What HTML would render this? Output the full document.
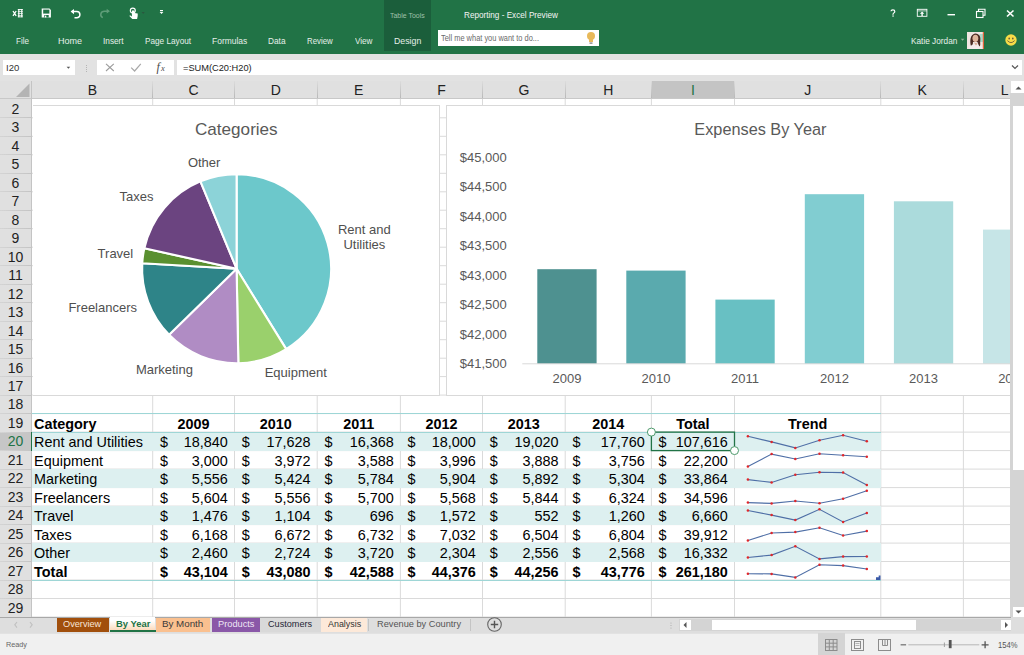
<!DOCTYPE html><html><head><meta charset="utf-8"><style>
*{margin:0;padding:0;box-sizing:border-box}
body{width:1024px;height:655px;overflow:hidden;position:relative;background:#fff;font-family:"Liberation Sans", sans-serif}
.a{position:absolute}
.t{position:absolute;white-space:nowrap;line-height:1}
</style></head><body>
<div class="a" style="left:0;top:0;width:1024px;height:54px;background:#217346"></div>
<div class="a" style="left:384px;top:0;width:47px;height:51px;background:#1b5e3b"></div>
<div class="t" style="left:390.17px;top:12.03px;font-size:7.5px;font-weight:normal;color:#9fc0aa;transform:scaleX(0.9270);transform-origin:0 0;">Table Tools</div>
<div class="t" style="left:464.42px;top:10.63px;font-size:9px;font-weight:normal;color:#f4f4f4;transform:scaleX(0.9071);transform-origin:0 0;">Reporting - Excel Preview</div>
<div class="t" style="left:16.26px;top:35.77px;font-size:9.5px;font-weight:normal;color:#e6efe9;transform:scaleX(0.8491);transform-origin:0 0;">File</div>
<div class="t" style="left:58.29px;top:35.77px;font-size:9.5px;font-weight:normal;color:#e6efe9;transform:scaleX(0.9485);transform-origin:0 0;">Home</div>
<div class="t" style="left:103.35px;top:35.77px;font-size:9.5px;font-weight:normal;color:#e6efe9;transform:scaleX(0.8696);transform-origin:0 0;">Insert</div>
<div class="t" style="left:145.25px;top:35.77px;font-size:9.5px;font-weight:normal;color:#e6efe9;transform:scaleX(0.8648);transform-origin:0 0;">Page Layout</div>
<div class="t" style="left:212.03px;top:35.77px;font-size:9.5px;font-weight:normal;color:#e6efe9;transform:scaleX(0.8909);transform-origin:0 0;">Formulas</div>
<div class="t" style="left:268.25px;top:35.77px;font-size:9.5px;font-weight:normal;color:#e6efe9;transform:scaleX(0.8718);transform-origin:0 0;">Data</div>
<div class="t" style="left:306.98px;top:35.77px;font-size:9.5px;font-weight:normal;color:#e6efe9;transform:scaleX(0.8262);transform-origin:0 0;">Review</div>
<div class="t" style="left:354.50px;top:35.77px;font-size:9.5px;font-weight:normal;color:#e6efe9;transform:scaleX(0.8537);transform-origin:0 0;">View</div>
<div class="t" style="left:393.61px;top:35.77px;font-size:9.5px;font-weight:normal;color:#e6efe9;transform:scaleX(0.9239);transform-origin:0 0;">Design</div>
<div class="a" style="left:438px;top:30px;width:161px;height:16px;background:#fff"></div>
<div class="t" style="left:440.79px;top:34.23px;font-size:9px;font-weight:normal;color:#6a6a6a;transform:scaleX(0.8264);transform-origin:0 0;">Tell me what you want to do...</div>
<svg class="a" style="left:585px;top:31px" width="12" height="14" viewBox="0 0 12 14"><circle cx="6" cy="5" r="4" fill="#e8b95a"/><rect x="4" y="8" width="4" height="3" fill="#e8b95a"/><rect x="4.5" y="11.5" width="3" height="1.2" fill="#777"/></svg>
<div class="t" style="left:911.35px;top:35.56px;font-size:9.5px;font-weight:normal;color:#e6efe9;transform:scaleX(0.8692);transform-origin:0 0;">Katie Jordan</div>
<svg class="a" style="left:960px;top:38px" width="6" height="4" viewBox="0 0 6 4"><path d="M0.8 0.8h3.6l-1.8 2z" fill="#8fb59b"/></svg>
<svg class="a" style="left:967px;top:31.6px" width="17.4" height="17.4" viewBox="0 0 17.4 17.4"><rect width="17.4" height="17.4" fill="#efe6e2"/><rect x="12.5" y="2" width="3.5" height="8" fill="#a8d8c8"/><rect x="15.8" y="0" width="1.6" height="17.4" fill="#e0643a"/><path d="M1.5 17.4 C2 13,4 12.5,8.5 12.5 C13 12.5,15 13,15.5 17.4z" fill="#f4ebeb"/><path d="M3.8 13.5 C2.8 9,3 2.5,8 1.4 C12.5 1.2,14 5,13.2 9 C13 11.5,13.8 13.5,12.5 14.5 C11 12,10.5 10,10.5 10 L6 10 C6 12,5.5 13.5,3.8 13.5z" fill="#4b2a22"/><ellipse cx="8.4" cy="6.3" rx="2.9" ry="3.6" fill="#dfb59c"/><path d="M7 10.5 l2 3 l1.5 -2z" fill="#d9a88e"/></svg>
<svg class="a" style="left:1004.5px;top:34.2px" width="12" height="12" viewBox="0 0 12 12"><circle cx="6" cy="6" r="5.7" fill="#f7dc48"/><ellipse cx="4.2" cy="4.4" rx="0.85" ry="1" fill="#6a603c"/><ellipse cx="7.8" cy="4.4" rx="0.85" ry="1" fill="#6a603c"/><path d="M2.4 6.6 Q6 10.6 9.6 6.6" stroke="#6a603c" stroke-width="0.9" fill="none"/></svg>
<svg class="a" style="left:0;top:0" width="180" height="28" viewBox="0 0 180 28"><path d="M13 11 l3.2 4.8 M16.2 11 l-3.2 4.8" stroke="#fff" stroke-width="1.3"/><g fill="#fff"><rect x="18.2" y="9" width="1.2" height="8.2"/><rect x="21.2" y="9" width="1.2" height="8.2"/><rect x="17.8" y="9" width="5" height="0.9"/><rect x="17.8" y="11.2" width="5" height="0.7"/><rect x="17.8" y="13.3" width="5" height="0.7"/><rect x="17.8" y="15.4" width="5" height="0.7"/><rect x="17.8" y="16.5" width="5" height="0.8"/></g><path d="M41.7 8.5h7.8l1.4 1.4v7.6h-9.2z" fill="#fff"/><rect x="43.2" y="9.6" width="6.2" height="4" fill="#217346"/><rect x="44.3" y="15" width="4.4" height="2.5" fill="#217346"/><rect x="45" y="15.6" width="1.3" height="1.9" fill="#fff"/><path d="M71.8 11.6 h5 a3.1 3.1 0 0 1 0 6.2 h-2.3" stroke="#fff" stroke-width="1.5" fill="none"/><path d="M70.6 11.6 l3.4 -2.7 v5.4z" fill="#fff"/><path d="M102.8 17.6 c-3.2 -1.6 -2.6 -6.4 1.8 -6.4 h3.6" stroke="#5f9d79" stroke-width="1.5" fill="none"/><path d="M109.9 11.2 l-3.2 -2.4 v4.8z" fill="#5f9d79"/><circle cx="132.8" cy="10.6" r="2.5" fill="none" stroke="#fff" stroke-width="1.1"/><path d="M131.9 10.6 v6 l-1.9 -1.3 l-0.6 0.8 l2.9 3 h4.8 l0.6 -3.2 v-2.4 l-3.2 -0.6 v-2.3z" fill="#fff"/><path d="M141.6 12.2 h3.2 l-1.6 1.6z" fill="#2d4f3c"/><rect x="160" y="10" width="3" height="1.2" fill="#fff"/><path d="M159.6 12 h3.8 l-1.9 2z" fill="#fff"/></svg>
<svg class="a" style="left:880px;top:0" width="144" height="26" viewBox="880 0 144 26"><path d="M891 11.3 c0.1 -1.9 3.8 -1.9 3.8 0.1 c0 1.4 -1.8 1.5 -1.8 2.9 v0.4" stroke="#fff" stroke-width="1.2" fill="none"/><rect x="892.4" y="15.4" width="1.3" height="1.3" fill="#fff"/><rect x="917.3" y="9.3" width="9.6" height="7" fill="none" stroke="#fff" stroke-width="0.9"/><path d="M917.3 10.9h9.6" stroke="#fff" stroke-width="0.7"/><path d="M922.1 11.6 l-2.2 2.2 h1.5 v2.2 h1.4 v-2.2 h1.5z" fill="#fff"/><rect x="947.5" y="14" width="7.5" height="1.4" fill="#fff"/><rect x="976.5" y="11.5" width="6.5" height="6" fill="none" stroke="#fff" stroke-width="1.1"/><path d="M978.5 11.5 v-2.2 h6.5 v6 h-2" fill="none" stroke="#fff" stroke-width="1.1"/><path d="M1007 10.5 l6.5 6 M1013.5 10.5 l-6.5 6" stroke="#fff" stroke-width="1.6"/></svg>
<div class="a" style="left:0;top:54px;width:1024px;height:26.5px;background:#e2e2e2"></div>
<div class="a" style="left:3px;top:60px;width:72px;height:15px;background:#fff"></div>
<div class="t" style="left:6px;top:63px;font-size:9.5px;color:#333">I20</div>
<svg class="a" style="left:66px;top:66px" width="5" height="4" viewBox="0 0 5 4"><path d="M0.6 0.8h3.6l-1.8 2z" fill="#555"/></svg>
<svg class="a" style="left:85px;top:64px" width="3" height="8" viewBox="0 0 3 8"><g fill="#aaa"><rect x="1" y="1" width="0.9" height="0.9"/><rect x="1" y="3" width="0.9" height="0.9"/><rect x="1" y="5" width="0.9" height="0.9"/><rect x="1" y="7" width="0.9" height="0.9"/></g></svg>
<div class="a" style="left:97px;top:60px;width:77px;height:15px;background:#fff"></div>
<svg class="a" style="left:97px;top:60px" width="77" height="15" viewBox="97 60 77 15"><path d="M106 63.8 l7.8 7.2 M113.8 63.8 l-7.8 7.2" stroke="#9c9c9c" stroke-width="1.1"/><path d="M131.2 67.6 l3.4 3.4 l6.2 -7.2" stroke="#a8a8a8" stroke-width="1.2" fill="none"/><text x="156.6" y="70.6" font-family="Liberation Serif" font-style="italic" font-size="12" fill="#4a4a4a">f</text><text x="161" y="71.4" font-family="Liberation Serif" font-style="italic" font-size="8.5" fill="#4a4a4a">x</text></svg>
<div class="a" style="left:177px;top:60px;width:845px;height:15px;background:#fff"></div>
<div class="t" style="left:182.80px;top:63.80px;font-size:9.2px;font-weight:normal;color:#222;transform:scaleX(1.0067);transform-origin:0 0;">=SUM(C20:H20)</div>
<svg class="a" style="left:1011px;top:64px" width="8" height="6" viewBox="0 0 8 6"><path d="M1 1.5 l3 3 l3 -3" stroke="#555" stroke-width="1.2" fill="none"/></svg>
<div class="a" style="left:0;top:80.5px;width:1010.5px;height:18.3px;background:#e0e0e0"></div>
<svg class="a" style="left:0;top:80px" width="32" height="19" viewBox="0 0 32 19"><path d="M29.5 3.5 v13.5 h-13.5z" fill="#b4b4b4"/></svg>
<div class="a" style="left:651.4px;top:80.8px;width:83.1px;height:18.3px;background:#c4c4c4;border-bottom:1.6px solid #217346"></div>
<div class="t" style="left:32.0px;top:83px;width:120.7px;text-align:center;font-size:14px;color:#222">B</div>
<div class="t" style="left:152.7px;top:83px;width:81.8px;text-align:center;font-size:14px;color:#222">C</div>
<div class="t" style="left:234.5px;top:83px;width:82.7px;text-align:center;font-size:14px;color:#222">D</div>
<div class="t" style="left:317.2px;top:83px;width:83.2px;text-align:center;font-size:14px;color:#222">E</div>
<div class="t" style="left:400.4px;top:83px;width:82.1px;text-align:center;font-size:14px;color:#222">F</div>
<div class="t" style="left:482.5px;top:83px;width:82.7px;text-align:center;font-size:14px;color:#222">G</div>
<div class="t" style="left:565.2px;top:83px;width:86.2px;text-align:center;font-size:14px;color:#222">H</div>
<div class="t" style="left:651.4px;top:83px;width:83.1px;text-align:center;font-size:14px;color:#217346">I</div>
<div class="t" style="left:734.5px;top:83px;width:146.3px;text-align:center;font-size:14px;color:#222">J</div>
<div class="t" style="left:880.8px;top:83px;width:82.6px;text-align:center;font-size:14px;color:#222">K</div>
<div class="t" style="left:963.4px;top:83px;width:82.6px;text-align:center;font-size:14px;color:#222">L</div>
<div class="a" style="left:152.2px;top:81px;width:1px;height:17.5px;background:linear-gradient(#dcdcdc,#b6b6b6)"></div>
<div class="a" style="left:234.0px;top:81px;width:1px;height:17.5px;background:linear-gradient(#dcdcdc,#b6b6b6)"></div>
<div class="a" style="left:316.7px;top:81px;width:1px;height:17.5px;background:linear-gradient(#dcdcdc,#b6b6b6)"></div>
<div class="a" style="left:399.9px;top:81px;width:1px;height:17.5px;background:linear-gradient(#dcdcdc,#b6b6b6)"></div>
<div class="a" style="left:482.0px;top:81px;width:1px;height:17.5px;background:linear-gradient(#dcdcdc,#b6b6b6)"></div>
<div class="a" style="left:564.7px;top:81px;width:1px;height:17.5px;background:linear-gradient(#dcdcdc,#b6b6b6)"></div>
<div class="a" style="left:650.9px;top:81px;width:1px;height:17.5px;background:linear-gradient(#dcdcdc,#b6b6b6)"></div>
<div class="a" style="left:734.0px;top:81px;width:1px;height:17.5px;background:linear-gradient(#dcdcdc,#b6b6b6)"></div>
<div class="a" style="left:880.3px;top:81px;width:1px;height:17.5px;background:linear-gradient(#dcdcdc,#b6b6b6)"></div>
<div class="a" style="left:962.9px;top:81px;width:1px;height:17.5px;background:linear-gradient(#dcdcdc,#b6b6b6)"></div>
<div class="a" style="left:0;top:98px;width:1010.5px;height:1px;background:#c8c8c8"></div>
<div class="a" style="left:0;top:98.8px;width:32px;height:518.2px;background:#e0e0e0"></div>
<div class="a" style="left:0;top:432.1px;width:32px;height:18.5px;background:#c6c6c6"></div>
<div class="t" style="left:0;top:101.6px;width:31px;text-align:center;font-size:14px;color:#222">2</div>
<div class="a" style="left:0;top:117.3px;width:31px;height:1px;background:linear-gradient(90deg,#d4d4d4,#c4c4c4)"></div>
<div class="t" style="left:0;top:120.1px;width:31px;text-align:center;font-size:14px;color:#222">3</div>
<div class="a" style="left:0;top:135.8px;width:31px;height:1px;background:linear-gradient(90deg,#d4d4d4,#c4c4c4)"></div>
<div class="t" style="left:0;top:138.6px;width:31px;text-align:center;font-size:14px;color:#222">4</div>
<div class="a" style="left:0;top:154.3px;width:31px;height:1px;background:linear-gradient(90deg,#d4d4d4,#c4c4c4)"></div>
<div class="t" style="left:0;top:157.1px;width:31px;text-align:center;font-size:14px;color:#222">5</div>
<div class="a" style="left:0;top:172.8px;width:31px;height:1px;background:linear-gradient(90deg,#d4d4d4,#c4c4c4)"></div>
<div class="t" style="left:0;top:175.6px;width:31px;text-align:center;font-size:14px;color:#222">6</div>
<div class="a" style="left:0;top:191.2px;width:31px;height:1px;background:linear-gradient(90deg,#d4d4d4,#c4c4c4)"></div>
<div class="t" style="left:0;top:194.1px;width:31px;text-align:center;font-size:14px;color:#222">7</div>
<div class="a" style="left:0;top:209.7px;width:31px;height:1px;background:linear-gradient(90deg,#d4d4d4,#c4c4c4)"></div>
<div class="t" style="left:0;top:212.5px;width:31px;text-align:center;font-size:14px;color:#222">8</div>
<div class="a" style="left:0;top:228.2px;width:31px;height:1px;background:linear-gradient(90deg,#d4d4d4,#c4c4c4)"></div>
<div class="t" style="left:0;top:231.0px;width:31px;text-align:center;font-size:14px;color:#222">9</div>
<div class="a" style="left:0;top:246.7px;width:31px;height:1px;background:linear-gradient(90deg,#d4d4d4,#c4c4c4)"></div>
<div class="t" style="left:0;top:249.5px;width:31px;text-align:center;font-size:14px;color:#222">10</div>
<div class="a" style="left:0;top:265.2px;width:31px;height:1px;background:linear-gradient(90deg,#d4d4d4,#c4c4c4)"></div>
<div class="t" style="left:0;top:268.0px;width:31px;text-align:center;font-size:14px;color:#222">11</div>
<div class="a" style="left:0;top:283.7px;width:31px;height:1px;background:linear-gradient(90deg,#d4d4d4,#c4c4c4)"></div>
<div class="t" style="left:0;top:286.5px;width:31px;text-align:center;font-size:14px;color:#222">12</div>
<div class="a" style="left:0;top:302.2px;width:31px;height:1px;background:linear-gradient(90deg,#d4d4d4,#c4c4c4)"></div>
<div class="t" style="left:0;top:305.0px;width:31px;text-align:center;font-size:14px;color:#222">13</div>
<div class="a" style="left:0;top:320.7px;width:31px;height:1px;background:linear-gradient(90deg,#d4d4d4,#c4c4c4)"></div>
<div class="t" style="left:0;top:323.5px;width:31px;text-align:center;font-size:14px;color:#222">14</div>
<div class="a" style="left:0;top:339.2px;width:31px;height:1px;background:linear-gradient(90deg,#d4d4d4,#c4c4c4)"></div>
<div class="t" style="left:0;top:342.0px;width:31px;text-align:center;font-size:14px;color:#222">15</div>
<div class="a" style="left:0;top:357.7px;width:31px;height:1px;background:linear-gradient(90deg,#d4d4d4,#c4c4c4)"></div>
<div class="t" style="left:0;top:360.5px;width:31px;text-align:center;font-size:14px;color:#222">16</div>
<div class="a" style="left:0;top:376.1px;width:31px;height:1px;background:linear-gradient(90deg,#d4d4d4,#c4c4c4)"></div>
<div class="t" style="left:0;top:378.9px;width:31px;text-align:center;font-size:14px;color:#222">17</div>
<div class="a" style="left:0;top:394.6px;width:31px;height:1px;background:linear-gradient(90deg,#d4d4d4,#c4c4c4)"></div>
<div class="t" style="left:0;top:397.4px;width:31px;text-align:center;font-size:14px;color:#222">18</div>
<div class="a" style="left:0;top:413.1px;width:31px;height:1px;background:linear-gradient(90deg,#d4d4d4,#c4c4c4)"></div>
<div class="t" style="left:0;top:415.9px;width:31px;text-align:center;font-size:14px;color:#222">19</div>
<div class="a" style="left:0;top:431.6px;width:31px;height:1px;background:linear-gradient(90deg,#d4d4d4,#c4c4c4)"></div>
<div class="t" style="left:0;top:434.4px;width:31px;text-align:center;font-size:14px;color:#217346">20</div>
<div class="a" style="left:0;top:450.1px;width:31px;height:1px;background:linear-gradient(90deg,#d4d4d4,#c4c4c4)"></div>
<div class="t" style="left:0;top:452.9px;width:31px;text-align:center;font-size:14px;color:#222">21</div>
<div class="a" style="left:0;top:468.6px;width:31px;height:1px;background:linear-gradient(90deg,#d4d4d4,#c4c4c4)"></div>
<div class="t" style="left:0;top:471.4px;width:31px;text-align:center;font-size:14px;color:#222">22</div>
<div class="a" style="left:0;top:487.1px;width:31px;height:1px;background:linear-gradient(90deg,#d4d4d4,#c4c4c4)"></div>
<div class="t" style="left:0;top:489.9px;width:31px;text-align:center;font-size:14px;color:#222">23</div>
<div class="a" style="left:0;top:505.6px;width:31px;height:1px;background:linear-gradient(90deg,#d4d4d4,#c4c4c4)"></div>
<div class="t" style="left:0;top:508.4px;width:31px;text-align:center;font-size:14px;color:#222">24</div>
<div class="a" style="left:0;top:524.1px;width:31px;height:1px;background:linear-gradient(90deg,#d4d4d4,#c4c4c4)"></div>
<div class="t" style="left:0;top:526.9px;width:31px;text-align:center;font-size:14px;color:#222">25</div>
<div class="a" style="left:0;top:542.6px;width:31px;height:1px;background:linear-gradient(90deg,#d4d4d4,#c4c4c4)"></div>
<div class="t" style="left:0;top:545.4px;width:31px;text-align:center;font-size:14px;color:#222">26</div>
<div class="a" style="left:0;top:561.0px;width:31px;height:1px;background:linear-gradient(90deg,#d4d4d4,#c4c4c4)"></div>
<div class="t" style="left:0;top:563.8px;width:31px;text-align:center;font-size:14px;color:#222">27</div>
<div class="a" style="left:0;top:579.5px;width:31px;height:1px;background:linear-gradient(90deg,#d4d4d4,#c4c4c4)"></div>
<div class="t" style="left:0;top:582.3px;width:31px;text-align:center;font-size:14px;color:#222">28</div>
<div class="a" style="left:0;top:598.0px;width:31px;height:1px;background:linear-gradient(90deg,#d4d4d4,#c4c4c4)"></div>
<div class="t" style="left:0;top:600.8px;width:31px;text-align:center;font-size:14px;color:#222">29</div>
<div class="a" style="left:0;top:616.5px;width:31px;height:1px;background:linear-gradient(90deg,#d4d4d4,#c4c4c4)"></div>
<div class="a" style="left:31px;top:81px;width:1px;height:536px;background:#c4c4c4"></div>
<div class="a" style="left:31px;top:432.1px;width:1.5px;height:18.5px;background:#217346"></div>
<svg class="a" style="left:0;top:0" width="1024" height="655" viewBox="0 0 1024 655"><line x1="152.7" y1="99" x2="152.7" y2="617" stroke="#dadada" stroke-width="1"/><line x1="234.5" y1="99" x2="234.5" y2="617" stroke="#dadada" stroke-width="1"/><line x1="317.2" y1="99" x2="317.2" y2="617" stroke="#dadada" stroke-width="1"/><line x1="400.4" y1="99" x2="400.4" y2="617" stroke="#dadada" stroke-width="1"/><line x1="482.5" y1="99" x2="482.5" y2="617" stroke="#dadada" stroke-width="1"/><line x1="565.2" y1="99" x2="565.2" y2="617" stroke="#dadada" stroke-width="1"/><line x1="651.4" y1="99" x2="651.4" y2="617" stroke="#dadada" stroke-width="1"/><line x1="734.5" y1="99" x2="734.5" y2="617" stroke="#dadada" stroke-width="1"/><line x1="880.8" y1="99" x2="880.8" y2="617" stroke="#dadada" stroke-width="1"/><line x1="963.4" y1="99" x2="963.4" y2="617" stroke="#dadada" stroke-width="1"/><line x1="32" y1="117.8" x2="1010.5" y2="117.8" stroke="#dadada" stroke-width="1"/><line x1="32" y1="136.3" x2="1010.5" y2="136.3" stroke="#dadada" stroke-width="1"/><line x1="32" y1="154.8" x2="1010.5" y2="154.8" stroke="#dadada" stroke-width="1"/><line x1="32" y1="173.3" x2="1010.5" y2="173.3" stroke="#dadada" stroke-width="1"/><line x1="32" y1="191.8" x2="1010.5" y2="191.8" stroke="#dadada" stroke-width="1"/><line x1="32" y1="210.2" x2="1010.5" y2="210.2" stroke="#dadada" stroke-width="1"/><line x1="32" y1="228.7" x2="1010.5" y2="228.7" stroke="#dadada" stroke-width="1"/><line x1="32" y1="247.2" x2="1010.5" y2="247.2" stroke="#dadada" stroke-width="1"/><line x1="32" y1="265.7" x2="1010.5" y2="265.7" stroke="#dadada" stroke-width="1"/><line x1="32" y1="284.2" x2="1010.5" y2="284.2" stroke="#dadada" stroke-width="1"/><line x1="32" y1="302.7" x2="1010.5" y2="302.7" stroke="#dadada" stroke-width="1"/><line x1="32" y1="321.2" x2="1010.5" y2="321.2" stroke="#dadada" stroke-width="1"/><line x1="32" y1="339.7" x2="1010.5" y2="339.7" stroke="#dadada" stroke-width="1"/><line x1="32" y1="358.2" x2="1010.5" y2="358.2" stroke="#dadada" stroke-width="1"/><line x1="32" y1="376.6" x2="1010.5" y2="376.6" stroke="#dadada" stroke-width="1"/><line x1="32" y1="395.1" x2="1010.5" y2="395.1" stroke="#dadada" stroke-width="1"/><line x1="32" y1="413.6" x2="1010.5" y2="413.6" stroke="#dadada" stroke-width="1"/><line x1="32" y1="432.1" x2="1010.5" y2="432.1" stroke="#dadada" stroke-width="1"/><line x1="32" y1="450.6" x2="1010.5" y2="450.6" stroke="#dadada" stroke-width="1"/><line x1="32" y1="469.1" x2="1010.5" y2="469.1" stroke="#dadada" stroke-width="1"/><line x1="32" y1="487.6" x2="1010.5" y2="487.6" stroke="#dadada" stroke-width="1"/><line x1="32" y1="506.1" x2="1010.5" y2="506.1" stroke="#dadada" stroke-width="1"/><line x1="32" y1="524.6" x2="1010.5" y2="524.6" stroke="#dadada" stroke-width="1"/><line x1="32" y1="543.1" x2="1010.5" y2="543.1" stroke="#dadada" stroke-width="1"/><line x1="32" y1="561.5" x2="1010.5" y2="561.5" stroke="#dadada" stroke-width="1"/><line x1="32" y1="580.0" x2="1010.5" y2="580.0" stroke="#dadada" stroke-width="1"/><line x1="32" y1="598.5" x2="1010.5" y2="598.5" stroke="#dadada" stroke-width="1"/><line x1="32" y1="617.0" x2="1010.5" y2="617.0" stroke="#dadada" stroke-width="1"/></svg>
<div class="a" style="left:32px;top:432.1px;width:848.8px;height:18.49px;background:#ddf0f0"></div>
<div class="a" style="left:32px;top:469.1px;width:848.8px;height:18.49px;background:#ddf0f0"></div>
<div class="a" style="left:32px;top:506.1px;width:848.8px;height:18.49px;background:#ddf0f0"></div>
<div class="a" style="left:32px;top:543.1px;width:848.8px;height:18.49px;background:#ddf0f0"></div>
<div class="a" style="left:32px;top:413.1px;width:848.8px;height:1px;background:#9ed6d6"></div>
<div class="a" style="left:32px;top:431.6px;width:848.8px;height:1px;background:#9ed6d6"></div>
<div class="a" style="left:32px;top:579.5px;width:848.8px;height:1px;background:#9ed6d6"></div>
<div class="t" style="left:34.1px;top:416.6px;font-size:14.4px;font-weight:bold;color:#000">Category</div>
<div class="t" style="left:152.7px;top:416.6px;width:81.8px;text-align:center;font-size:14.4px;font-weight:bold;color:#000">2009</div>
<div class="t" style="left:234.5px;top:416.6px;width:82.7px;text-align:center;font-size:14.4px;font-weight:bold;color:#000">2010</div>
<div class="t" style="left:317.2px;top:416.6px;width:83.2px;text-align:center;font-size:14.4px;font-weight:bold;color:#000">2011</div>
<div class="t" style="left:400.4px;top:416.6px;width:82.1px;text-align:center;font-size:14.4px;font-weight:bold;color:#000">2012</div>
<div class="t" style="left:482.5px;top:416.6px;width:82.7px;text-align:center;font-size:14.4px;font-weight:bold;color:#000">2013</div>
<div class="t" style="left:565.2px;top:416.6px;width:86.2px;text-align:center;font-size:14.4px;font-weight:bold;color:#000">2014</div>
<div class="t" style="left:651.4px;top:416.6px;width:83.1px;text-align:center;font-size:14.4px;font-weight:bold;color:#000">Total</div>
<div class="t" style="left:734.5px;top:416.6px;width:146.3px;text-align:center;font-size:14.4px;font-weight:bold;color:#000">Trend</div>
<div class="t" style="left:34.1px;top:435.1px;font-size:14.4px;font-weight:normal;color:#000">Rent and Utilities</div>
<div class="t" style="left:159.9px;top:435.1px;font-size:14.4px;font-weight:normal;color:#000">$</div>
<div class="t" style="left:127.8px;top:435.1px;width:100px;text-align:right;font-size:14.4px;font-weight:normal;color:#000">18,840</div>
<div class="t" style="left:241.7px;top:435.1px;font-size:14.4px;font-weight:normal;color:#000">$</div>
<div class="t" style="left:210.5px;top:435.1px;width:100px;text-align:right;font-size:14.4px;font-weight:normal;color:#000">17,628</div>
<div class="t" style="left:324.4px;top:435.1px;font-size:14.4px;font-weight:normal;color:#000">$</div>
<div class="t" style="left:293.7px;top:435.1px;width:100px;text-align:right;font-size:14.4px;font-weight:normal;color:#000">16,368</div>
<div class="t" style="left:407.6px;top:435.1px;font-size:14.4px;font-weight:normal;color:#000">$</div>
<div class="t" style="left:375.8px;top:435.1px;width:100px;text-align:right;font-size:14.4px;font-weight:normal;color:#000">18,000</div>
<div class="t" style="left:489.7px;top:435.1px;font-size:14.4px;font-weight:normal;color:#000">$</div>
<div class="t" style="left:458.5px;top:435.1px;width:100px;text-align:right;font-size:14.4px;font-weight:normal;color:#000">19,020</div>
<div class="t" style="left:572.4px;top:435.1px;font-size:14.4px;font-weight:normal;color:#000">$</div>
<div class="t" style="left:544.7px;top:435.1px;width:100px;text-align:right;font-size:14.4px;font-weight:normal;color:#000">17,760</div>
<div class="t" style="left:658.6px;top:435.1px;font-size:14.4px;font-weight:normal;color:#000">$</div>
<div class="t" style="left:627.8px;top:435.1px;width:100px;text-align:right;font-size:14.4px;font-weight:normal;color:#000">107,616</div>
<div class="t" style="left:34.1px;top:453.6px;font-size:14.4px;font-weight:normal;color:#000">Equipment</div>
<div class="t" style="left:159.9px;top:453.6px;font-size:14.4px;font-weight:normal;color:#000">$</div>
<div class="t" style="left:127.8px;top:453.6px;width:100px;text-align:right;font-size:14.4px;font-weight:normal;color:#000">3,000</div>
<div class="t" style="left:241.7px;top:453.6px;font-size:14.4px;font-weight:normal;color:#000">$</div>
<div class="t" style="left:210.5px;top:453.6px;width:100px;text-align:right;font-size:14.4px;font-weight:normal;color:#000">3,972</div>
<div class="t" style="left:324.4px;top:453.6px;font-size:14.4px;font-weight:normal;color:#000">$</div>
<div class="t" style="left:293.7px;top:453.6px;width:100px;text-align:right;font-size:14.4px;font-weight:normal;color:#000">3,588</div>
<div class="t" style="left:407.6px;top:453.6px;font-size:14.4px;font-weight:normal;color:#000">$</div>
<div class="t" style="left:375.8px;top:453.6px;width:100px;text-align:right;font-size:14.4px;font-weight:normal;color:#000">3,996</div>
<div class="t" style="left:489.7px;top:453.6px;font-size:14.4px;font-weight:normal;color:#000">$</div>
<div class="t" style="left:458.5px;top:453.6px;width:100px;text-align:right;font-size:14.4px;font-weight:normal;color:#000">3,888</div>
<div class="t" style="left:572.4px;top:453.6px;font-size:14.4px;font-weight:normal;color:#000">$</div>
<div class="t" style="left:544.7px;top:453.6px;width:100px;text-align:right;font-size:14.4px;font-weight:normal;color:#000">3,756</div>
<div class="t" style="left:658.6px;top:453.6px;font-size:14.4px;font-weight:normal;color:#000">$</div>
<div class="t" style="left:627.8px;top:453.6px;width:100px;text-align:right;font-size:14.4px;font-weight:normal;color:#000">22,200</div>
<div class="t" style="left:34.1px;top:472.1px;font-size:14.4px;font-weight:normal;color:#000">Marketing</div>
<div class="t" style="left:159.9px;top:472.1px;font-size:14.4px;font-weight:normal;color:#000">$</div>
<div class="t" style="left:127.8px;top:472.1px;width:100px;text-align:right;font-size:14.4px;font-weight:normal;color:#000">5,556</div>
<div class="t" style="left:241.7px;top:472.1px;font-size:14.4px;font-weight:normal;color:#000">$</div>
<div class="t" style="left:210.5px;top:472.1px;width:100px;text-align:right;font-size:14.4px;font-weight:normal;color:#000">5,424</div>
<div class="t" style="left:324.4px;top:472.1px;font-size:14.4px;font-weight:normal;color:#000">$</div>
<div class="t" style="left:293.7px;top:472.1px;width:100px;text-align:right;font-size:14.4px;font-weight:normal;color:#000">5,784</div>
<div class="t" style="left:407.6px;top:472.1px;font-size:14.4px;font-weight:normal;color:#000">$</div>
<div class="t" style="left:375.8px;top:472.1px;width:100px;text-align:right;font-size:14.4px;font-weight:normal;color:#000">5,904</div>
<div class="t" style="left:489.7px;top:472.1px;font-size:14.4px;font-weight:normal;color:#000">$</div>
<div class="t" style="left:458.5px;top:472.1px;width:100px;text-align:right;font-size:14.4px;font-weight:normal;color:#000">5,892</div>
<div class="t" style="left:572.4px;top:472.1px;font-size:14.4px;font-weight:normal;color:#000">$</div>
<div class="t" style="left:544.7px;top:472.1px;width:100px;text-align:right;font-size:14.4px;font-weight:normal;color:#000">5,304</div>
<div class="t" style="left:658.6px;top:472.1px;font-size:14.4px;font-weight:normal;color:#000">$</div>
<div class="t" style="left:627.8px;top:472.1px;width:100px;text-align:right;font-size:14.4px;font-weight:normal;color:#000">33,864</div>
<div class="t" style="left:34.1px;top:490.6px;font-size:14.4px;font-weight:normal;color:#000">Freelancers</div>
<div class="t" style="left:159.9px;top:490.6px;font-size:14.4px;font-weight:normal;color:#000">$</div>
<div class="t" style="left:127.8px;top:490.6px;width:100px;text-align:right;font-size:14.4px;font-weight:normal;color:#000">5,604</div>
<div class="t" style="left:241.7px;top:490.6px;font-size:14.4px;font-weight:normal;color:#000">$</div>
<div class="t" style="left:210.5px;top:490.6px;width:100px;text-align:right;font-size:14.4px;font-weight:normal;color:#000">5,556</div>
<div class="t" style="left:324.4px;top:490.6px;font-size:14.4px;font-weight:normal;color:#000">$</div>
<div class="t" style="left:293.7px;top:490.6px;width:100px;text-align:right;font-size:14.4px;font-weight:normal;color:#000">5,700</div>
<div class="t" style="left:407.6px;top:490.6px;font-size:14.4px;font-weight:normal;color:#000">$</div>
<div class="t" style="left:375.8px;top:490.6px;width:100px;text-align:right;font-size:14.4px;font-weight:normal;color:#000">5,568</div>
<div class="t" style="left:489.7px;top:490.6px;font-size:14.4px;font-weight:normal;color:#000">$</div>
<div class="t" style="left:458.5px;top:490.6px;width:100px;text-align:right;font-size:14.4px;font-weight:normal;color:#000">5,844</div>
<div class="t" style="left:572.4px;top:490.6px;font-size:14.4px;font-weight:normal;color:#000">$</div>
<div class="t" style="left:544.7px;top:490.6px;width:100px;text-align:right;font-size:14.4px;font-weight:normal;color:#000">6,324</div>
<div class="t" style="left:658.6px;top:490.6px;font-size:14.4px;font-weight:normal;color:#000">$</div>
<div class="t" style="left:627.8px;top:490.6px;width:100px;text-align:right;font-size:14.4px;font-weight:normal;color:#000">34,596</div>
<div class="t" style="left:34.1px;top:509.1px;font-size:14.4px;font-weight:normal;color:#000">Travel</div>
<div class="t" style="left:159.9px;top:509.1px;font-size:14.4px;font-weight:normal;color:#000">$</div>
<div class="t" style="left:127.8px;top:509.1px;width:100px;text-align:right;font-size:14.4px;font-weight:normal;color:#000">1,476</div>
<div class="t" style="left:241.7px;top:509.1px;font-size:14.4px;font-weight:normal;color:#000">$</div>
<div class="t" style="left:210.5px;top:509.1px;width:100px;text-align:right;font-size:14.4px;font-weight:normal;color:#000">1,104</div>
<div class="t" style="left:324.4px;top:509.1px;font-size:14.4px;font-weight:normal;color:#000">$</div>
<div class="t" style="left:293.7px;top:509.1px;width:100px;text-align:right;font-size:14.4px;font-weight:normal;color:#000">696</div>
<div class="t" style="left:407.6px;top:509.1px;font-size:14.4px;font-weight:normal;color:#000">$</div>
<div class="t" style="left:375.8px;top:509.1px;width:100px;text-align:right;font-size:14.4px;font-weight:normal;color:#000">1,572</div>
<div class="t" style="left:489.7px;top:509.1px;font-size:14.4px;font-weight:normal;color:#000">$</div>
<div class="t" style="left:458.5px;top:509.1px;width:100px;text-align:right;font-size:14.4px;font-weight:normal;color:#000">552</div>
<div class="t" style="left:572.4px;top:509.1px;font-size:14.4px;font-weight:normal;color:#000">$</div>
<div class="t" style="left:544.7px;top:509.1px;width:100px;text-align:right;font-size:14.4px;font-weight:normal;color:#000">1,260</div>
<div class="t" style="left:658.6px;top:509.1px;font-size:14.4px;font-weight:normal;color:#000">$</div>
<div class="t" style="left:627.8px;top:509.1px;width:100px;text-align:right;font-size:14.4px;font-weight:normal;color:#000">6,660</div>
<div class="t" style="left:34.1px;top:527.6px;font-size:14.4px;font-weight:normal;color:#000">Taxes</div>
<div class="t" style="left:159.9px;top:527.6px;font-size:14.4px;font-weight:normal;color:#000">$</div>
<div class="t" style="left:127.8px;top:527.6px;width:100px;text-align:right;font-size:14.4px;font-weight:normal;color:#000">6,168</div>
<div class="t" style="left:241.7px;top:527.6px;font-size:14.4px;font-weight:normal;color:#000">$</div>
<div class="t" style="left:210.5px;top:527.6px;width:100px;text-align:right;font-size:14.4px;font-weight:normal;color:#000">6,672</div>
<div class="t" style="left:324.4px;top:527.6px;font-size:14.4px;font-weight:normal;color:#000">$</div>
<div class="t" style="left:293.7px;top:527.6px;width:100px;text-align:right;font-size:14.4px;font-weight:normal;color:#000">6,732</div>
<div class="t" style="left:407.6px;top:527.6px;font-size:14.4px;font-weight:normal;color:#000">$</div>
<div class="t" style="left:375.8px;top:527.6px;width:100px;text-align:right;font-size:14.4px;font-weight:normal;color:#000">7,032</div>
<div class="t" style="left:489.7px;top:527.6px;font-size:14.4px;font-weight:normal;color:#000">$</div>
<div class="t" style="left:458.5px;top:527.6px;width:100px;text-align:right;font-size:14.4px;font-weight:normal;color:#000">6,504</div>
<div class="t" style="left:572.4px;top:527.6px;font-size:14.4px;font-weight:normal;color:#000">$</div>
<div class="t" style="left:544.7px;top:527.6px;width:100px;text-align:right;font-size:14.4px;font-weight:normal;color:#000">6,804</div>
<div class="t" style="left:658.6px;top:527.6px;font-size:14.4px;font-weight:normal;color:#000">$</div>
<div class="t" style="left:627.8px;top:527.6px;width:100px;text-align:right;font-size:14.4px;font-weight:normal;color:#000">39,912</div>
<div class="t" style="left:34.1px;top:546.1px;font-size:14.4px;font-weight:normal;color:#000">Other</div>
<div class="t" style="left:159.9px;top:546.1px;font-size:14.4px;font-weight:normal;color:#000">$</div>
<div class="t" style="left:127.8px;top:546.1px;width:100px;text-align:right;font-size:14.4px;font-weight:normal;color:#000">2,460</div>
<div class="t" style="left:241.7px;top:546.1px;font-size:14.4px;font-weight:normal;color:#000">$</div>
<div class="t" style="left:210.5px;top:546.1px;width:100px;text-align:right;font-size:14.4px;font-weight:normal;color:#000">2,724</div>
<div class="t" style="left:324.4px;top:546.1px;font-size:14.4px;font-weight:normal;color:#000">$</div>
<div class="t" style="left:293.7px;top:546.1px;width:100px;text-align:right;font-size:14.4px;font-weight:normal;color:#000">3,720</div>
<div class="t" style="left:407.6px;top:546.1px;font-size:14.4px;font-weight:normal;color:#000">$</div>
<div class="t" style="left:375.8px;top:546.1px;width:100px;text-align:right;font-size:14.4px;font-weight:normal;color:#000">2,304</div>
<div class="t" style="left:489.7px;top:546.1px;font-size:14.4px;font-weight:normal;color:#000">$</div>
<div class="t" style="left:458.5px;top:546.1px;width:100px;text-align:right;font-size:14.4px;font-weight:normal;color:#000">2,556</div>
<div class="t" style="left:572.4px;top:546.1px;font-size:14.4px;font-weight:normal;color:#000">$</div>
<div class="t" style="left:544.7px;top:546.1px;width:100px;text-align:right;font-size:14.4px;font-weight:normal;color:#000">2,568</div>
<div class="t" style="left:658.6px;top:546.1px;font-size:14.4px;font-weight:normal;color:#000">$</div>
<div class="t" style="left:627.8px;top:546.1px;width:100px;text-align:right;font-size:14.4px;font-weight:normal;color:#000">16,332</div>
<div class="t" style="left:34.1px;top:564.5px;font-size:14.4px;font-weight:bold;color:#000">Total</div>
<div class="t" style="left:159.9px;top:564.5px;font-size:14.4px;font-weight:bold;color:#000">$</div>
<div class="t" style="left:127.8px;top:564.5px;width:100px;text-align:right;font-size:14.4px;font-weight:bold;color:#000">43,104</div>
<div class="t" style="left:241.7px;top:564.5px;font-size:14.4px;font-weight:bold;color:#000">$</div>
<div class="t" style="left:210.5px;top:564.5px;width:100px;text-align:right;font-size:14.4px;font-weight:bold;color:#000">43,080</div>
<div class="t" style="left:324.4px;top:564.5px;font-size:14.4px;font-weight:bold;color:#000">$</div>
<div class="t" style="left:293.7px;top:564.5px;width:100px;text-align:right;font-size:14.4px;font-weight:bold;color:#000">42,588</div>
<div class="t" style="left:407.6px;top:564.5px;font-size:14.4px;font-weight:bold;color:#000">$</div>
<div class="t" style="left:375.8px;top:564.5px;width:100px;text-align:right;font-size:14.4px;font-weight:bold;color:#000">44,376</div>
<div class="t" style="left:489.7px;top:564.5px;font-size:14.4px;font-weight:bold;color:#000">$</div>
<div class="t" style="left:458.5px;top:564.5px;width:100px;text-align:right;font-size:14.4px;font-weight:bold;color:#000">44,256</div>
<div class="t" style="left:572.4px;top:564.5px;font-size:14.4px;font-weight:bold;color:#000">$</div>
<div class="t" style="left:544.7px;top:564.5px;width:100px;text-align:right;font-size:14.4px;font-weight:bold;color:#000">43,776</div>
<div class="t" style="left:658.6px;top:564.5px;font-size:14.4px;font-weight:bold;color:#000">$</div>
<div class="t" style="left:627.8px;top:564.5px;width:100px;text-align:right;font-size:14.4px;font-weight:bold;color:#000">261,180</div>
<svg class="a" style="left:0;top:0" width="1024" height="655" viewBox="0 0 1024 655"><polyline points="747.9,436.2 771.6,441.9 795.3,447.9 819.5,440.2 843.1,435.3 866.8,441.3" fill="none" stroke="#4f6fa6" stroke-width="1.1"/><circle cx="747.9" cy="436.2" r="1.25" fill="#e0262a"/><circle cx="771.6" cy="441.9" r="1.25" fill="#e0262a"/><circle cx="795.3" cy="447.9" r="1.25" fill="#e0262a"/><circle cx="819.5" cy="440.2" r="1.25" fill="#e0262a"/><circle cx="843.1" cy="435.3" r="1.25" fill="#e0262a"/><circle cx="866.8" cy="441.3" r="1.25" fill="#e0262a"/><polyline points="747.9,466.4 771.6,454.1 795.3,459.0 819.5,453.8 843.1,455.2 866.8,456.8" fill="none" stroke="#4f6fa6" stroke-width="1.1"/><circle cx="747.9" cy="466.4" r="1.25" fill="#e0262a"/><circle cx="771.6" cy="454.1" r="1.25" fill="#e0262a"/><circle cx="795.3" cy="459.0" r="1.25" fill="#e0262a"/><circle cx="819.5" cy="453.8" r="1.25" fill="#e0262a"/><circle cx="843.1" cy="455.2" r="1.25" fill="#e0262a"/><circle cx="866.8" cy="456.8" r="1.25" fill="#e0262a"/><polyline points="747.9,479.6 771.6,482.4 795.3,474.8 819.5,472.3 843.1,472.6 866.8,484.9" fill="none" stroke="#4f6fa6" stroke-width="1.1"/><circle cx="747.9" cy="479.6" r="1.25" fill="#e0262a"/><circle cx="771.6" cy="482.4" r="1.25" fill="#e0262a"/><circle cx="795.3" cy="474.8" r="1.25" fill="#e0262a"/><circle cx="819.5" cy="472.3" r="1.25" fill="#e0262a"/><circle cx="843.1" cy="472.6" r="1.25" fill="#e0262a"/><circle cx="866.8" cy="484.9" r="1.25" fill="#e0262a"/><polyline points="747.9,502.6 771.6,503.4 795.3,501.0 819.5,503.2 843.1,498.7 866.8,490.8" fill="none" stroke="#4f6fa6" stroke-width="1.1"/><circle cx="747.9" cy="502.6" r="1.25" fill="#e0262a"/><circle cx="771.6" cy="503.4" r="1.25" fill="#e0262a"/><circle cx="795.3" cy="501.0" r="1.25" fill="#e0262a"/><circle cx="819.5" cy="503.2" r="1.25" fill="#e0262a"/><circle cx="843.1" cy="498.7" r="1.25" fill="#e0262a"/><circle cx="866.8" cy="490.8" r="1.25" fill="#e0262a"/><polyline points="747.9,510.5 771.6,515.1 795.3,520.1 819.5,509.3 843.1,521.9 866.8,513.1" fill="none" stroke="#4f6fa6" stroke-width="1.1"/><circle cx="747.9" cy="510.5" r="1.25" fill="#e0262a"/><circle cx="771.6" cy="515.1" r="1.25" fill="#e0262a"/><circle cx="795.3" cy="520.1" r="1.25" fill="#e0262a"/><circle cx="819.5" cy="509.3" r="1.25" fill="#e0262a"/><circle cx="843.1" cy="521.9" r="1.25" fill="#e0262a"/><circle cx="866.8" cy="513.1" r="1.25" fill="#e0262a"/><polyline points="747.9,540.4 771.6,533.0 795.3,532.1 819.5,527.8 843.1,535.5 866.8,531.1" fill="none" stroke="#4f6fa6" stroke-width="1.1"/><circle cx="747.9" cy="540.4" r="1.25" fill="#e0262a"/><circle cx="771.6" cy="533.0" r="1.25" fill="#e0262a"/><circle cx="795.3" cy="532.1" r="1.25" fill="#e0262a"/><circle cx="819.5" cy="527.8" r="1.25" fill="#e0262a"/><circle cx="843.1" cy="535.5" r="1.25" fill="#e0262a"/><circle cx="866.8" cy="531.1" r="1.25" fill="#e0262a"/><polyline points="747.9,557.5 771.6,555.1 795.3,546.3 819.5,558.9 843.1,556.6 866.8,556.5" fill="none" stroke="#4f6fa6" stroke-width="1.1"/><circle cx="747.9" cy="557.5" r="1.25" fill="#e0262a"/><circle cx="771.6" cy="555.1" r="1.25" fill="#e0262a"/><circle cx="795.3" cy="546.3" r="1.25" fill="#e0262a"/><circle cx="819.5" cy="558.9" r="1.25" fill="#e0262a"/><circle cx="843.1" cy="556.6" r="1.25" fill="#e0262a"/><circle cx="866.8" cy="556.5" r="1.25" fill="#e0262a"/><polyline points="747.9,573.7 771.6,573.9 795.3,577.4 819.5,564.8 843.1,565.6 866.8,569.0" fill="none" stroke="#4f6fa6" stroke-width="1.1"/><circle cx="747.9" cy="573.7" r="1.25" fill="#e0262a"/><circle cx="771.6" cy="573.9" r="1.25" fill="#e0262a"/><circle cx="795.3" cy="577.4" r="1.25" fill="#e0262a"/><circle cx="819.5" cy="564.8" r="1.25" fill="#e0262a"/><circle cx="843.1" cy="565.6" r="1.25" fill="#e0262a"/><circle cx="866.8" cy="569.0" r="1.25" fill="#e0262a"/><path d="M876 580 h4.5 v-4.5 h-1.8 v1.8 h-2.7z" fill="#3a5aa8"/></svg>
<svg class="a" style="left:0;top:0" width="1024" height="655" viewBox="0 0 1024 655"><rect x="651.4" y="432.1" width="83.1" height="18.49" fill="none" stroke="#217346" stroke-width="1.3"/><circle cx="651.4" cy="432.1" r="4" fill="#fff" stroke="#4e9a6c" stroke-width="1"/><circle cx="734.5" cy="450.6" r="4" fill="#fff" stroke="#4e9a6c" stroke-width="1"/></svg>
<div class="a" style="left:32.5px;top:105px;width:407.5px;height:291px;background:#fff;border:1px solid #d9d9d9;border-left:none"></div>
<div class="t" style="left:195.05px;top:120.89px;font-size:17px;font-weight:normal;color:#595959;transform:scaleX(1.0056);transform-origin:0 0;">Categories</div>
<svg class="a" style="left:0;top:0" width="1024" height="655" viewBox="0 0 1024 655"><path d="M236.60 268.70 L236.60 174.20 A94.5 94.5 0 0 1 286.21 349.13 Z" fill="#6cc8cb" stroke="#fff" stroke-width="2.1" stroke-linejoin="round"/><path d="M236.60 268.70 L286.21 349.13 A94.5 94.5 0 0 1 238.36 363.18 Z" fill="#9ad06c" stroke="#fff" stroke-width="2.1" stroke-linejoin="round"/><path d="M236.60 268.70 L238.36 363.18 A94.5 94.5 0 0 1 169.07 334.81 Z" fill="#b08cc4" stroke="#fff" stroke-width="2.1" stroke-linejoin="round"/><path d="M236.60 268.70 L169.07 334.81 A94.5 94.5 0 0 1 142.26 263.27 Z" fill="#2e8488" stroke="#fff" stroke-width="2.1" stroke-linejoin="round"/><path d="M236.60 268.70 L142.26 263.27 A94.5 94.5 0 0 1 144.33 248.29 Z" fill="#5a9030" stroke="#fff" stroke-width="2.1" stroke-linejoin="round"/><path d="M236.60 268.70 L144.33 248.29 A94.5 94.5 0 0 1 200.42 181.40 Z" fill="#6b4480" stroke="#fff" stroke-width="2.1" stroke-linejoin="round"/><path d="M236.60 268.70 L200.42 181.40 A94.5 94.5 0 0 1 236.60 174.20 Z" fill="#8cd3d8" stroke="#fff" stroke-width="2.1" stroke-linejoin="round"/></svg>
<div class="t" style="left:187.9px;top:155.6px;font-size:13px;color:#4f4f4f">Other</div>
<div class="t" style="left:119.5px;top:190.0px;font-size:13px;color:#4f4f4f">Taxes</div>
<div class="t" style="left:97.6px;top:247.4px;font-size:13px;color:#4f4f4f">Travel</div>
<div class="t" style="left:68.4px;top:301.3px;font-size:13px;color:#4f4f4f">Freelancers</div>
<div class="t" style="left:135.9px;top:363.2px;font-size:13px;color:#4f4f4f">Marketing</div>
<div class="t" style="left:264.7px;top:366.2px;font-size:13px;color:#4f4f4f">Equipment</div>
<div class="t" style="left:337.9px;top:223.1px;font-size:13px;color:#4f4f4f">Rent and</div>
<div class="t" style="left:343.4px;top:237.6px;font-size:13px;color:#4f4f4f">Utilities</div>
<div class="a" style="left:446px;top:105px;width:600px;height:291px;background:#fff;border:1px solid #d9d9d9"></div>
<div class="t" style="left:694.35px;top:121.08px;font-size:16.3px;font-weight:normal;color:#595959;">Expenses By Year</div>
<div class="t" style="left:400px;top:357.0px;width:106.8px;text-align:right;font-size:13px;color:#595959">$41,500</div>
<div class="t" style="left:400px;top:327.5px;width:106.8px;text-align:right;font-size:13px;color:#595959">$42,000</div>
<div class="t" style="left:400px;top:298.0px;width:106.8px;text-align:right;font-size:13px;color:#595959">$42,500</div>
<div class="t" style="left:400px;top:268.5px;width:106.8px;text-align:right;font-size:13px;color:#595959">$43,000</div>
<div class="t" style="left:400px;top:239.1px;width:106.8px;text-align:right;font-size:13px;color:#595959">$43,500</div>
<div class="t" style="left:400px;top:209.6px;width:106.8px;text-align:right;font-size:13px;color:#595959">$44,000</div>
<div class="t" style="left:400px;top:180.1px;width:106.8px;text-align:right;font-size:13px;color:#595959">$44,500</div>
<div class="t" style="left:400px;top:150.6px;width:106.8px;text-align:right;font-size:13px;color:#595959">$45,000</div>
<svg class="a" style="left:0;top:0" width="1010.5" height="655" viewBox="0 0 1010.5 655"><rect x="537.3" y="269.2" width="59.3" height="94.6" fill="#4e9190"/><rect x="626.3" y="270.6" width="59.3" height="93.2" fill="#5aaaae"/><rect x="715.4" y="299.6" width="59.3" height="64.2" fill="#68c0c3"/><rect x="804.8" y="194.2" width="59.3" height="169.6" fill="#81cdd1"/><rect x="893.9" y="201.3" width="59.3" height="162.5" fill="#abdbdc"/><rect x="983.0" y="229.6" width="59.3" height="134.2" fill="#c6e5e7"/><line x1="522.3" y1="363.8" x2="1010.5" y2="363.8" stroke="#d9d9d9" stroke-width="1"/><text x="566.9" y="383.1" text-anchor="middle" font-family="Liberation Sans" font-size="13" fill="#595959">2009</text><text x="655.9" y="383.1" text-anchor="middle" font-family="Liberation Sans" font-size="13" fill="#595959">2010</text><text x="745.0" y="383.1" text-anchor="middle" font-family="Liberation Sans" font-size="13" fill="#595959">2011</text><text x="834.4" y="383.1" text-anchor="middle" font-family="Liberation Sans" font-size="13" fill="#595959">2012</text><text x="923.5" y="383.1" text-anchor="middle" font-family="Liberation Sans" font-size="13" fill="#595959">2013</text><text x="1012.6" y="383.1" text-anchor="middle" font-family="Liberation Sans" font-size="13" fill="#595959">2014</text></svg>
<div class="a" style="left:1010px;top:92.6px;width:14px;height:524.4px;background:#d4d4d4"></div>
<div class="a" style="left:1012.5px;top:83px;width:11px;height:10px;background:#fff"></div>
<svg class="a" style="left:1012.5px;top:83px" width="11" height="10" viewBox="0 0 11 10"><path d="M2.5 6.5 h6 l-3 -3z" fill="#555"/></svg>
<div class="a" style="left:1012.5px;top:106px;width:11px;height:364px;background:#fff"></div>
<div class="a" style="left:1013px;top:607.4px;width:11px;height:10px;background:#fff"></div>
<svg class="a" style="left:1013px;top:607.4px" width="11" height="10" viewBox="0 0 11 10"><path d="M2.5 3.5 h6 l-3 3z" fill="#555"/></svg>
<div class="a" style="left:0;top:617px;width:1024px;height:16.5px;background:#dedede"></div>
<div class="a" style="left:0;top:617px;width:110px;height:1px;background:#a8a8a8"></div>
<div class="a" style="left:155px;top:617px;width:855.5px;height:1px;background:#a8a8a8"></div>
<svg class="a" style="left:0;top:617px" width="60" height="16" viewBox="0 0 60 16"><path d="M17 5 l-2.2 2.8 l2.2 2.8" stroke="#c0c0c0" stroke-width="1.1" fill="none"/><path d="M30 5 l2.2 2.8 l-2.2 2.8" stroke="#c0c0c0" stroke-width="1.1" fill="none"/></svg>
<div class="a" style="left:57.0px;top:618.3px;width:52.1px;height:13.4px;background:#a14f0c"></div>
<div class="t" style="left:63.32px;top:619.06px;font-size:9.5px;font-weight:normal;color:#f7e4d6;transform:scaleX(0.9656);transform-origin:0 0;">Overview</div>
<div class="a" style="left:156.4px;top:618.3px;width:53.6px;height:13.4px;background:#fac08f"></div>
<div class="t" style="left:162.13px;top:619.06px;font-size:9.5px;font-weight:normal;color:#3a3a3a;transform:scaleX(1.0271);transform-origin:0 0;">By Month</div>
<div class="a" style="left:212.1px;top:618.3px;width:48.1px;height:13.4px;background:#8a58a8"></div>
<div class="t" style="left:217.87px;top:619.06px;font-size:9.5px;font-weight:normal;color:#efe6f5;transform:scaleX(0.9726);transform-origin:0 0;">Products</div>
<div class="a" style="left:260.2px;top:618.3px;width:60.4px;height:13.4px;background:#d9d9d9"></div>
<div class="t" style="left:268.32px;top:619.06px;font-size:9.5px;font-weight:normal;color:#262636;transform:scaleX(0.9591);transform-origin:0 0;">Customers</div>
<div class="a" style="left:320.6px;top:618.3px;width:46.9px;height:13.4px;background:#fde9d9"></div>
<div class="t" style="left:327.70px;top:619.06px;font-size:9.5px;font-weight:normal;color:#333;transform:scaleX(0.9371);transform-origin:0 0;">Analysis</div>
<div class="a" style="left:368.5px;top:618.3px;width:101.4px;height:13.4px;background:#dedede"></div>
<div class="t" style="left:376.87px;top:619.06px;font-size:9.5px;font-weight:normal;color:#555;transform:scaleX(0.9703);transform-origin:0 0;">Revenue by Country</div>
<div class="a" style="left:110.2px;top:617px;width:45px;height:14.5px;background:linear-gradient(#fff 0%,#fff 25%,#fcd3ae 100%)"></div>
<div class="t" style="left:115.51px;top:619.06px;font-size:9.5px;font-weight:bold;color:#217346;transform:scaleX(0.9882);transform-origin:0 0;">By Year</div>
<div class="a" style="left:110.2px;top:630.2px;width:45.5px;height:1.6px;background:#217346"></div>
<div class="a" style="left:367.5px;top:619px;width:1px;height:12px;background:#c4c4c4"></div>
<div class="a" style="left:469.9px;top:619px;width:1px;height:12px;background:#c4c4c4"></div>
<svg class="a" style="left:485px;top:615px" width="20" height="20" viewBox="0 0 20 20"><circle cx="9.5" cy="9.5" r="6.8" fill="none" stroke="#666" stroke-width="1.1"/><path d="M9.5 5.8 v7.4 M5.8 9.5 h7.4" stroke="#555" stroke-width="1.4"/></svg>
<svg class="a" style="left:668px;top:620px" width="6" height="12" viewBox="0 0 6 12"><circle cx="3" cy="3" r="0.6" fill="#aaa"/><circle cx="3" cy="5.5" r="0.6" fill="#aaa"/><circle cx="3" cy="8" r="0.6" fill="#aaa"/></svg>
<div class="a" style="left:679.3px;top:619.3px;width:331.5px;height:11.5px;background:#d4d4d4"></div>
<div class="a" style="left:680px;top:620px;width:10.5px;height:10px;background:#fff"></div>
<svg class="a" style="left:680px;top:620px" width="11" height="10" viewBox="0 0 11 10"><path d="M6.5 2 v6 l-3 -3z" fill="#555"/></svg>
<div class="a" style="left:712px;top:620px;width:204px;height:10px;background:#fff"></div>
<div class="a" style="left:1000.6px;top:620px;width:10.2px;height:10px;background:#fff"></div>
<svg class="a" style="left:1000.6px;top:620px" width="11" height="10" viewBox="0 0 11 10"><path d="M4 2 v6 l3 -3z" fill="#555"/></svg>
<div class="a" style="left:0;top:633px;width:1024px;height:22px;background:#f0f0f0;border-top:1px solid #e2e2e2"></div>
<div class="t" style="left:5.52px;top:640.96px;font-size:8px;font-weight:normal;color:#666;transform:scaleX(0.9079);transform-origin:0 0;">Ready</div>
<div class="a" style="left:818px;top:633px;width:26.8px;height:22px;background:#d4d4d4"></div>
<svg class="a" style="left:800px;top:633px" width="224" height="22" viewBox="800 633 224 22"><g stroke="#8c8c8c" stroke-width="1" fill="none"><rect x="825.5" y="639.5" width="11.5" height="11"/><path d="M829.3 639.5v11M833.2 639.5v11M825.5 643.2h11.5M825.5 646.9h11.5"/></g><g stroke="#8c8c8c" stroke-width="1" fill="none"><rect x="851.5" y="639.5" width="12" height="11"/><rect x="854.5" y="641.5" width="6" height="7"/><path d="M855.5 643.5h4M855.5 645.5h4" stroke-width="0.6"/></g><g stroke="#8c8c8c" stroke-width="1" fill="none"><rect x="878.5" y="639.5" width="12" height="11"/><path d="M882.5 639.5v6h5v-6"/><path d="M885 639.5v6"/></g><path d="M900.6 644.8h5.5" stroke="#777" stroke-width="1.3"/><path d="M908.3 644.8h71" stroke="#aaa" stroke-width="0.8"/><path d="M944.4 642.5v4.5" stroke="#999" stroke-width="0.9"/><rect x="948.8" y="640" width="2.8" height="8.2" fill="#555"/><path d="M981.6 644.8h7M985.1 641.3v7" stroke="#555" stroke-width="1.3"/></svg>
<div class="t" style="left:998.43px;top:640.89px;font-size:8.5px;font-weight:normal;color:#555;transform:scaleX(0.8964);transform-origin:0 0;">154%</div>
</body></html>
